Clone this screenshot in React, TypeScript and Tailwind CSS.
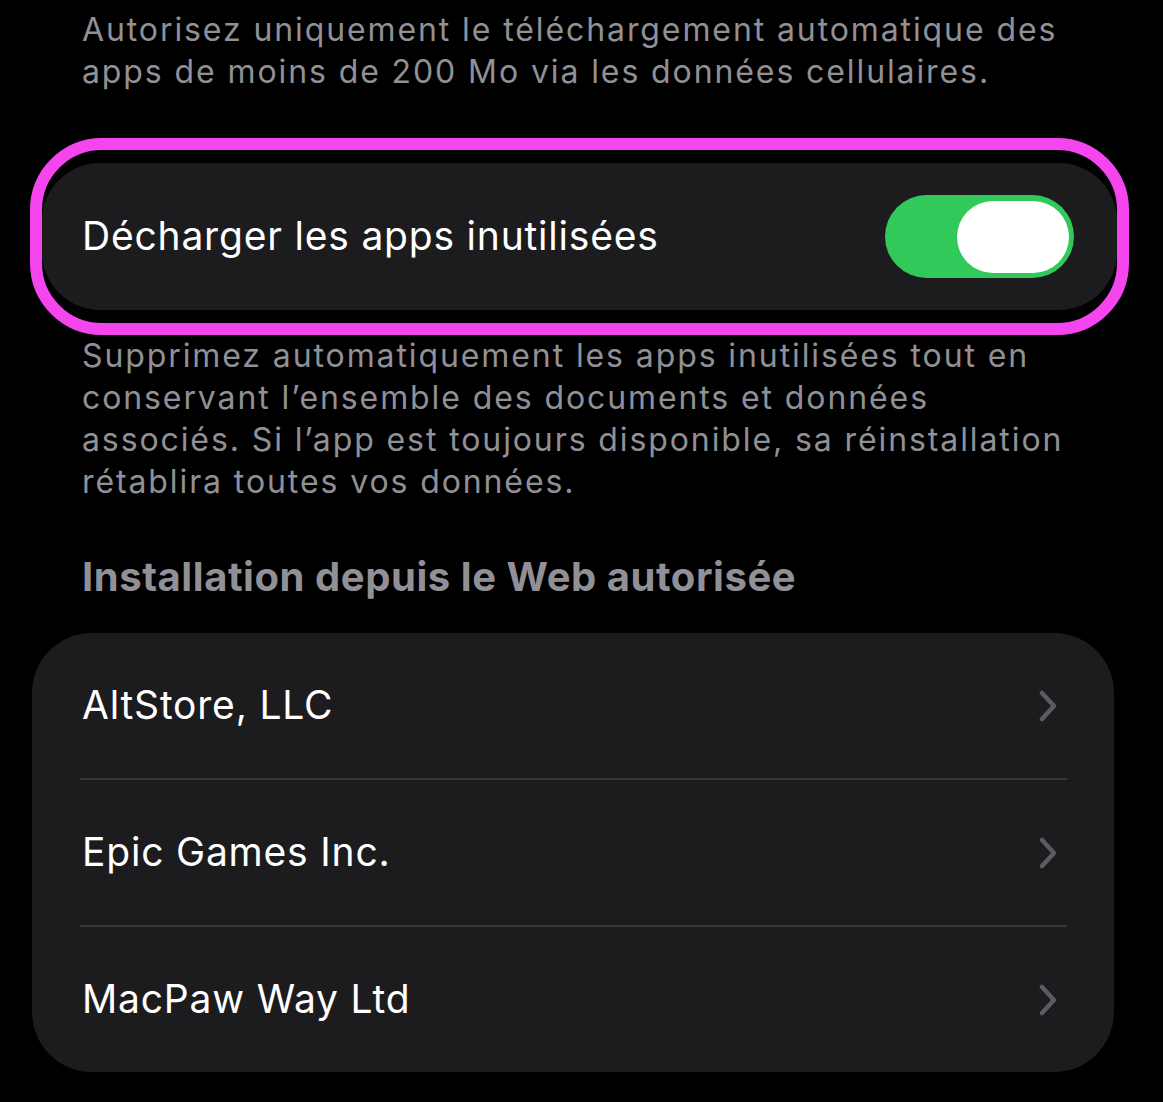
import React from "react";

const Chevron: React.FC = () => (
  <svg width="20" height="32" viewBox="0 0 20 32" fill="none" className="shrink-0">
    <path d="M4 3 L16 16 L4 29" stroke="#5b5b60" strokeWidth="4.5" strokeLinecap="round" strokeLinejoin="round" />
  </svg>
);

const Toggle: React.FC = () => (
  <div className="w-[189px] h-[83px] rounded-full bg-[#31c95a] flex items-center justify-end pr-[5px] shrink-0">
    <div className="w-[112px] h-[72px] rounded-full bg-white" />
  </div>
);

const developers = ["AltStore, LLC", "Epic Games Inc.", "MacPaw Way Ltd"];

const App: React.FC = () => {
  return (
    <div
      className="w-[1163px] h-[1102px] bg-black overflow-hidden pt-[9px]"
      style={{ fontFamily: "Inter, 'Noto Sans', sans-serif" }}
    >
      {/* Footnote above */}
      <p className="ml-[82px] mr-[10px] text-[32px] leading-[42px] text-[#909096] tracking-[1.9px] whitespace-nowrap">
        Autorisez uniquement le téléchargement automatique des
        <br />
        apps de moins de 200 Mo via les données cellulaires.
      </p>

      {/* Highlighted toggle row */}
      <div className="ml-[30px] mr-[34px] mt-[45px] rounded-[72px] border-[12px] border-[#f545ef] py-[13px]">
        <div className="h-[147px] rounded-[58px] bg-[#1c1c1e] flex items-center justify-between pl-[40px] pr-[43px]">
          <span className="text-[39px] text-white tracking-[0.8px]">Décharger les apps inutilisées</span>
          <Toggle />
        </div>
      </div>

      <p className="ml-[82px] mr-[10px] text-[32px] leading-[42px] text-[#909096] tracking-[1.9px] whitespace-nowrap">
        Supprimez automatiquement les apps inutilisées tout en
        <br />
        conservant l’ensemble des documents et données
        <br />
        associés. Si l’app est toujours disponible, sa réinstallation
        <br />
        rétablira toutes vos données.
      </p>

      {/* Section header */}
      <h2 className="ml-[82px] mt-[52px] text-[40px] leading-[44px] font-bold text-[#909096] tracking-[0.55px]">
        Installation depuis le Web autorisée
      </h2>

      {/* Developers list */}
      <div className="ml-[32px] mr-[49px] mt-[34px] rounded-[60px] bg-[#1c1c1e] overflow-hidden">
        {developers.map((name, i) => (
          <div key={name}>
            <div className="h-[145px] flex items-center justify-between pl-[50px] pr-[56px]">
              <span className="text-[39px] text-white tracking-[0.8px]">{name}</span>
              <Chevron />
            </div>
            {i < developers.length - 1 && (
              <div className="ml-[48px] mr-[47px] h-[2px] bg-[#38383a]" />
            )}
          </div>
        ))}
      </div>
    </div>
  );
};

export default App;
